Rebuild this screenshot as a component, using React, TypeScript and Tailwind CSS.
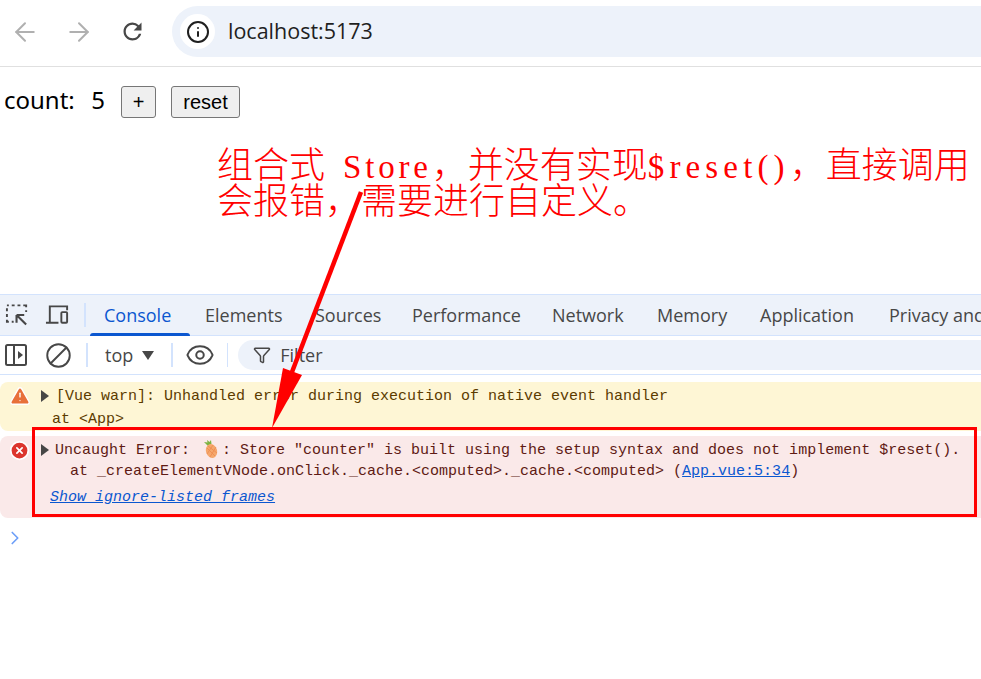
import { ArrowLeft, ArrowRight, Info, Ban, Eye, Filter, TriangleAlert, CircleX, ChevronRight } from 'lucide-react';

const tabs = [
  { label: 'Console', className: 'w-[114px] pl-[18px] text-[#0b57d0]' },
  { label: 'Elements', className: 'w-[110px] pl-[5px]' },
  { label: 'Sources', className: 'w-[97px] pl-[5px]' },
  { label: 'Performance', className: 'w-[140px] pl-[5px]' },
  { label: 'Network', className: 'w-[105px] pl-[5px]' },
  { label: 'Memory', className: 'w-[103px] pl-[5px]' },
  { label: 'Application', className: 'w-[129px] pl-[5px]' },
  { label: 'Privacy and security', className: 'w-[140px] pl-[5px]' },
];

function Pineapple() {
  return (
    <svg width="16" height="20" viewBox="0 0 16 20" className="ml-[4px] mr-[3px] inline-block align-[-5px]">
      <path d="M5 7 L1 3 L4.500 3.500 L4 1 L6.500 3 L8 1 L8.500 5 Z" fill="#7cb342" />
      <ellipse cx="8.500" cy="12" rx="5.500" ry="7" transform="rotate(-18 8.500 12)" fill="#f5a76c" />
      <path d="M4 9 L12 17 M5 7 L14 14 M10 6 L4 15 M13 8 L7 18" stroke="#ee8a4e" strokeWidth="0.800" />
    </svg>
  );
}

function Divider() {
  return <div className="h-6 w-[2px] bg-[#d3e3fd]" />;
}

export default function App() {
  return (
    <div className="relative h-[679px] w-[981px] overflow-hidden bg-white font-['Liberation_Sans',sans-serif]">
      {/* browser toolbar */}
      <div className="flex h-[67px] items-center border-b border-[#e0e0e0] pb-[3px]">
        <div className="flex w-[172px] items-center pl-[10px]">
          <ArrowLeft className="h-[30px] w-[30px] text-[#b0b0b0]" strokeWidth={1.600} />
          <ArrowRight className="ml-[24px] h-[30px] w-[30px] text-[#b0b0b0]" strokeWidth={1.600} />
          <svg width="27" height="27" viewBox="0 0 24 24" className="ml-[25px]" fill="#474747">
            <path d="M17.650 6.350A7.958 7.958 0 0 0 12 4c-4.420 0-7.990 3.580-7.990 8s3.570 8 7.990 8c3.730 0 6.840-2.550 7.730-6h-2.080A5.990 5.990 0 0 1 12 18c-3.310 0-6-2.690-6-6s2.690-6 6-6c1.660 0 3.140.690 4.220 1.780L13 11h7V4l-2.350 2.350z" />
          </svg>
        </div>
        <div className="flex h-[51px] flex-1 items-center rounded-l-full bg-[#edf2fa] pl-[8px]">
          <div className="flex h-[35px] w-[35px] items-center justify-center rounded-full bg-white">
            <Info className="h-6 w-6 text-[#1f1f1f]" strokeWidth={2} />
          </div>
          <span className="ml-[13px] font-['Open_Sans',sans-serif] text-[21.500px] text-[#1f1f1f]">localhost:5173</span>
        </div>
      </div>

      {/* page */}
      <div className="flex h-[227px] items-start pl-[4px] pt-[19px]">
        <div className="flex w-[101px] font-['Noto_Sans',sans-serif] text-[24px] leading-[28px] text-black">
          <span className="w-[89px]">count:</span>
          <span>5</span>
        </div>
        <button className="ml-[16px] h-[32px] w-[35px] rounded-[3px] border border-[#767676] bg-[#efefef] pb-[2px] text-[20px] text-black">+</button>
        <button className="ml-[15px] h-[32px] w-[69px] rounded-[3px] border border-[#767676] bg-[#efefef] pb-[2px] text-[20px] text-black">reset</button>
      </div>

      {/* devtools tabs */}
      <div className="flex h-[42px] items-stretch border-y border-[#d3e3fd] bg-[#edf2fa] font-['Open_Sans',sans-serif] text-[18px] text-[#474747]">
        <div className="flex w-[86px] shrink-0 items-center pl-[5px]">
          <svg width="24" height="24" viewBox="0 0 24 24" fill="none" stroke="currentColor" strokeWidth="2">
            <path d="M2 2 H4 M7 2 H10 M13 2 H16 M19 2 H22 V4 M22 7 V9 M2 5 V8 M2 11 V14 M2 17 V19 H4 M7 19 H9" strokeWidth="2" />
            <path d="M22 22 L12 12 M12 12 V20 M12 12 H20" strokeWidth="2.200" />
          </svg>
          <svg width="26" height="24" viewBox="0 0 26 24" fill="none" stroke="currentColor" strokeWidth="2" className="ml-[17px]">
            <path d="M5 19 V3 H23 V7 M1 20 H14" />
            <rect x="17" y="9" width="6" height="11" rx="1" />
          </svg>
          <div className="ml-[14px] h-6 w-[2px] bg-[#d3e3fd]" />
        </div>
        {tabs.map((tab) => (
          <div key={tab.label} className={`relative flex shrink-0 items-center whitespace-nowrap ${tab.className}`}>
            {tab.label}
            {tab.label === 'Console' && <div className="absolute bottom-[-1px] left-[4px] h-[3px] w-[100px] rounded-t-[3px] bg-[#0b57d0]" />}
          </div>
        ))}
      </div>

      {/* console toolbar */}
      <div className="flex h-[39px] items-center border-b border-[#d3e3fd] text-[#474747]">
        <svg width="22" height="22" viewBox="0 0 22 22" fill="none" stroke="currentColor" strokeWidth="2" className="ml-[5px] shrink-0">
          <rect x="1" y="1" width="20" height="20" rx="1.500" />
          <path d="M9 1 V21" />
          <path d="M13 7 L18 11 L13 15 Z" fill="currentColor" stroke="none" />
        </svg>
        <Ban className="ml-[18px] h-[27px] w-[27px] -scale-x-100" strokeWidth={1.700} />
        <div className="ml-[14px]"><Divider /></div>
        <span className="ml-[17px] font-['Open_Sans',sans-serif] text-[18px]">top</span>
        <div className="ml-[9px] h-0 w-0 border-x-[6px] border-t-[9px] border-x-transparent border-t-[#474747]" />
        <div className="ml-[17px]"><Divider /></div>
        <Eye className="ml-[12px] h-[30px] w-[30px]" strokeWidth={1.600} />
        <div className="ml-[12px] h-6 w-px bg-[#d3e3fd]" />
        <div className="ml-[10px] flex h-[30px] flex-1 items-center rounded-l-full bg-[#edf2fa] pl-[15px]">
          <Filter className="h-[18px] w-[18px]" strokeWidth={2} />
          <span className="ml-[9px] font-['Open_Sans',sans-serif] text-[18px]">Filter</span>
        </div>
      </div>

      {/* console messages */}
      <div className="mt-[7px] font-['Liberation_Mono',monospace] text-[15px] leading-[23px]">
        <div className="flex h-[49px] rounded-l-[8px] bg-[#fef6d5] pt-[3px] text-[#5c3b00]">
          <TriangleAlert className="ml-[9px] h-[22px] w-[22px] fill-[#e8703a] text-white" strokeWidth={1.500} />
          <div className="ml-[10px] mt-[5px] h-0 w-0 border-y-[6px] border-l-[8px] border-y-transparent border-l-[#474747]" />
          <div className="ml-[7px] whitespace-nowrap">
            <div>[Vue warn]: Unhandled error during execution of native event handler</div>
            <div className="-ml-[4px]">at &lt;App&gt;</div>
          </div>
        </div>
        <div className="mt-[5px] flex h-[82px] rounded-l-[8px] bg-[#fae9e9] pt-[3px] text-[#5f1a14]">
          <CircleX className="ml-[9px] mt-[1px] h-[21px] w-[21px] fill-[#dc362e] text-white" strokeWidth={2} />
          <div className="ml-[11px] mt-[5px] h-0 w-0 border-y-[6px] border-l-[8px] border-y-transparent border-l-[#474747]" />
          <div className="ml-[6px] whitespace-nowrap">
            <div className="h-[23px]">Uncaught Error: <Pineapple />: Store "counter" is built using the setup syntax and does not implement $reset().</div>
            <div className="ml-[15px] h-[20px] leading-[20px]">at _createElementVNode.onClick._cache.&lt;computed&gt;._cache.&lt;computed&gt; (<span className="text-[#0b57d0] underline">App.vue:5:34</span>)</div>
            <div className="-ml-[5px] mt-[1px] leading-[30px] italic text-[#0b57d0] underline">Show ignore-listed frames</div>
          </div>
        </div>
        <ChevronRight className="ml-[4px] mt-[9px] h-[22px] w-[22px] text-[#6c9ef8]" strokeWidth={1.800} />
      </div>

      {/* screenshot annotations */}
      <div className="absolute left-[217px] top-[144px] w-[764px] whitespace-nowrap font-['Noto_Sans_CJK_SC',serif] text-[36px] font-light text-[#ff0000]">
        <div className="h-[36px] leading-[36px]">组合式<span className="ml-[6px] font-['Liberation_Serif',serif] text-[33px] tracking-[3.800px]"> Store</span>，并没有实现<span className="font-['Liberation_Serif',serif] text-[33px] tracking-[5.150px]">$reset()</span>，直接调用</div>
        <div className="h-[36px] leading-[36px]">会报错，需要进行自定义。</div>
      </div>
      <svg width="981" height="679" viewBox="0 0 981 679" className="pointer-events-none absolute left-0 top-0">
        <path d="M361 192 L292 372" stroke="#ff0000" strokeWidth="4.500" />
        <path d="M272 428 L283 368 L302 375 Z" fill="#ff0000" />
      </svg>
      <div className="absolute left-[32px] top-[427px] h-[90px] w-[945px] border-[3px] border-[#ff0000]" />
    </div>
  );
}
